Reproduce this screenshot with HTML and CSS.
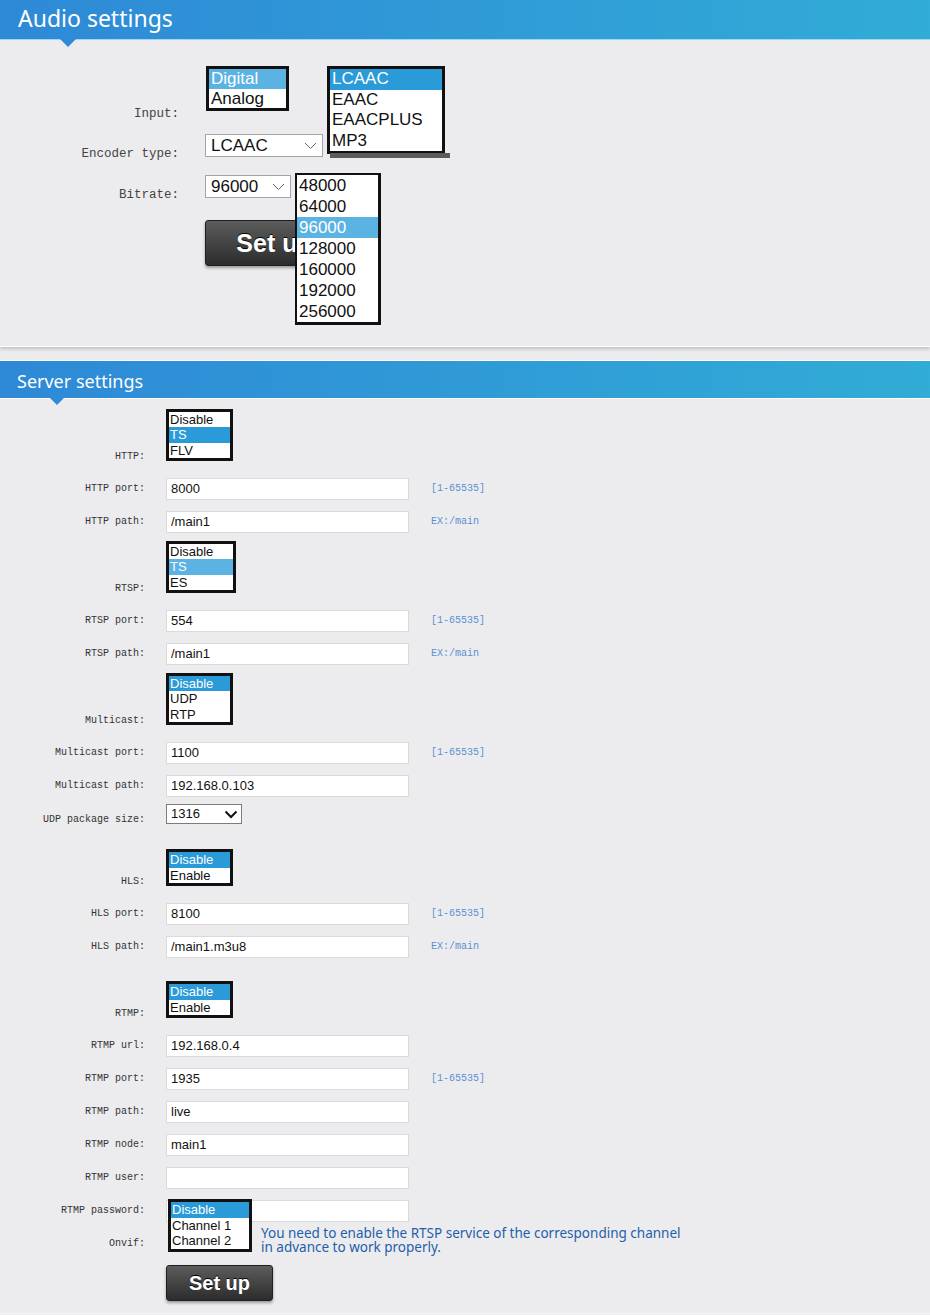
FILE: index.html
```html
<!DOCTYPE html>
<html lang="en">
<head>
<meta charset="utf-8">
<title>Audio and server settings</title>
<link rel="stylesheet" href="styles.css">
</head>
<body>
  <div class="panel audio">
    <div class="panel-head"><h2>Audio settings</h2></div>
    <div class="panel-body">
      <div class="row row-list">
        <label>Input:</label>
        <div class="listbox listbox-lg input-list">
          <div class="opt sel-soft">Digital</div>
          <div class="opt">Analog</div>
        </div>
      </div>
      <div class="row">
        <label>Encoder type:</label>
        <div class="drop">
          <div class="select select-lg enc-select">LCAAC
            <svg class="chev" width="13" height="8" viewBox="0 0 13 8"><polyline points="1,1 6.5,6.5 12,1" fill="none" stroke="#666" stroke-width="1"/></svg>
          </div>
          <div class="listbox listbox-lg popup enc-popup">
            <div class="opt sel">LCAAC</div>
            <div class="opt">EAAC</div>
            <div class="opt">EAACPLUS</div>
            <div class="opt">MP3</div>
          </div>
        </div>
      </div>
      <div class="row">
        <label>Bitrate:</label>
        <div class="drop">
          <div class="select select-lg rate-select">96000
            <svg class="chev" width="13" height="8" viewBox="0 0 13 8"><polyline points="1,1 6.5,6.5 12,1" fill="none" stroke="#666" stroke-width="1"/></svg>
          </div>
          <div class="listbox listbox-lg popup rate-popup">
            <div class="opt">48000</div>
            <div class="opt">64000</div>
            <div class="opt sel-soft">96000</div>
            <div class="opt">128000</div>
            <div class="opt">160000</div>
            <div class="opt">192000</div>
            <div class="opt">256000</div>
          </div>
        </div>
      </div>
      <div class="row-actions">
        <button class="btn btn-lg">Set up</button>
      </div>
    </div>
  </div>

  <div class="panel server">
    <div class="panel-head"><h2>Server settings</h2></div>
    <div class="panel-body">
      <div class="row row-list">
        <label>HTTP:</label>
        <div class="listbox">
          <div class="opt">Disable</div>
          <div class="opt sel">TS</div>
          <div class="opt">FLV</div>
        </div>
      </div>
      <div class="row">
        <label>HTTP port:</label>
        <input class="field" type="text" value="8000">
        <span class="hint">[1-65535]</span>
      </div>
      <div class="row">
        <label>HTTP path:</label>
        <input class="field" type="text" value="/main1">
        <span class="hint">EX:/main</span>
      </div>
      <div class="row row-list">
        <label>RTSP:</label>
        <div class="listbox listbox-wide">
          <div class="opt">Disable</div>
          <div class="opt sel-soft">TS</div>
          <div class="opt">ES</div>
        </div>
      </div>
      <div class="row">
        <label>RTSP port:</label>
        <input class="field" type="text" value="554">
        <span class="hint">[1-65535]</span>
      </div>
      <div class="row">
        <label>RTSP path:</label>
        <input class="field" type="text" value="/main1">
        <span class="hint">EX:/main</span>
      </div>
      <div class="row row-list">
        <label>Multicast:</label>
        <div class="listbox">
          <div class="opt sel">Disable</div>
          <div class="opt">UDP</div>
          <div class="opt">RTP</div>
        </div>
      </div>
      <div class="row">
        <label>Multicast port:</label>
        <input class="field" type="text" value="1100">
        <span class="hint">[1-65535]</span>
      </div>
      <div class="row">
        <label>Multicast path:</label>
        <input class="field" type="text" value="192.168.0.103">
      </div>
      <div class="row row-short">
        <label>UDP package size:</label>
        <div class="select select-sm">1316
          <svg class="chev" width="14" height="9" viewBox="0 0 14 9"><polyline points="1.5,1.5 7,7 12.5,1.5" fill="none" stroke="#111" stroke-width="2"/></svg>
        </div>
      </div>
      <div class="row row-list">
        <label>HLS:</label>
        <div class="listbox">
          <div class="opt sel">Disable</div>
          <div class="opt">Enable</div>
        </div>
      </div>
      <div class="row">
        <label>HLS port:</label>
        <input class="field" type="text" value="8100">
        <span class="hint">[1-65535]</span>
      </div>
      <div class="row">
        <label>HLS path:</label>
        <input class="field" type="text" value="/main1.m3u8">
        <span class="hint">EX:/main</span>
      </div>
      <div class="row row-list">
        <label>RTMP:</label>
        <div class="listbox">
          <div class="opt sel">Disable</div>
          <div class="opt">Enable</div>
        </div>
      </div>
      <div class="row">
        <label>RTMP url:</label>
        <input class="field" type="text" value="192.168.0.4">
      </div>
      <div class="row">
        <label>RTMP port:</label>
        <input class="field" type="text" value="1935">
        <span class="hint">[1-65535]</span>
      </div>
      <div class="row">
        <label>RTMP path:</label>
        <input class="field" type="text" value="live">
      </div>
      <div class="row">
        <label>RTMP node:</label>
        <input class="field" type="text" value="main1">
      </div>
      <div class="row">
        <label>RTMP user:</label>
        <input class="field" type="text" value="">
      </div>
      <div class="row">
        <label>RTMP password:</label>
        <input class="field" type="password" value="">
      </div>
      <div class="row">
        <label>Onvif:</label>
        <div class="drop onvif-anchor">
          <div class="listbox popup onvif-popup">
            <div class="opt sel">Disable</div>
            <div class="opt">Channel 1</div>
            <div class="opt">Channel 2</div>
          </div>
        </div>
        <p class="note">You need to enable the RTSP service of the corresponding channel<br>in advance to work properly.</p>
      </div>
      <div class="row-actions">
        <button class="btn">Set up</button>
      </div>
    </div>
  </div>
</body>
</html>
```

FILE: styles.css
```css
body {
  margin: 0;
  background-color: #ebebed;
  font-family: "Liberation Sans", Arial, sans-serif;
  color: #111;
}

/* panels */
.panel {
  background-color: #ececee;
}
.panel-head {
  position: relative;
  background: linear-gradient(to right, #2e89d7, #31acd6);
}
/* little pointer under the title bar */
.panel-head::after {
  content: "";
  position: absolute;
  left: 60px;
  bottom: -8px;
  border-left: 8px solid transparent;
  border-right: 8px solid transparent;
  border-top: 8px solid #2f8ad7;
}
.panel-head h2 {
  margin: 0;
  color: #fff;
  font-family: "Noto Sans", "Open Sans", sans-serif;
  font-weight: normal;
}
.audio .panel-head {
  height: 39px;
  border-bottom: 1px solid #9fd6f2;
}
.audio .panel-head h2 {
  padding-left: 18px;
  font-size: 23px;
  line-height: 36px;
}
.server .panel-head {
  height: 37px;
  border-top: 1px solid #fff;
  border-bottom: 1px solid #fff;
}
.server .panel-head::after {
  left: 50px;
  bottom: -7px;
  border-left-width: 7px;
  border-right-width: 7px;
  border-top-width: 7px;
}
.server .panel-head h2 {
  padding-left: 17px;
  font-size: 18px;
  line-height: 40px;
}

.audio {
  margin-bottom: 13px;
  border-bottom: 1px solid #fff;
  box-shadow: 0 2px 3px rgba(0, 0, 0, 0.18);
}
.audio .panel-body {
  height: 306px;
  box-sizing: border-box;
  padding-top: 26px;
}
.server .panel-body {
  padding: 7px 0 12px;
  border-bottom: 1px solid #f6f6f6;
}

/* rows */
.row {
  display: flex;
}
.row label {
  flex: none;
  text-align: right;
  font-family: "Liberation Mono", "Courier New", monospace;
}

.audio .row {
  align-items: flex-start;
  height: 23px;
  margin-bottom: 18px;
}
.audio .row label {
  width: 179px;
  margin-right: 26px;
  margin-top: 12px;
  font-size: 12.5px;
  line-height: 16px;
  color: #444;
}
.audio .row-list {
  height: 45px;
  margin-bottom: 23px;
}
.audio .row-list label {
  margin-top: 40px;
}
.audio .row-actions {
  margin-top: 22px;
  padding-left: 205px;
}

.server .row {
  align-items: center;
  height: 33px;
}
.server .row label {
  width: 145px;
  margin-right: 21px;
  font-size: 10px;
  line-height: 14px;
  color: #333;
}
.server .row-list {
  height: 66px;
  box-sizing: border-box;
  align-items: flex-end;
  padding-bottom: 11px;
}
.server .row-list label {
  margin-bottom: -3px;
}
.server .row-short {
  height: 29px;
  box-sizing: border-box;
  align-items: flex-start;
  padding-top: 2px;
}
.server .row-short label {
  margin-top: 9px;
}
.server .row-actions {
  margin-top: 5px;
  padding-left: 166px;
}

/* controls */
.field {
  width: 243px;
  height: 22px;
  box-sizing: border-box;
  margin: 0;
  padding: 0 4px;
  border: 1px solid #dadada;
  background: #fff;
  font-family: "Liberation Sans", Arial, sans-serif;
  font-size: 13px;
  color: #111;
  outline: none;
}
.hint {
  margin-left: 22px;
  font-family: "Liberation Mono", "Courier New", monospace;
  font-size: 10px;
  color: #5a90d2;
}
.note {
  margin: 0 0 8px 9px;
  font-family: "Noto Sans", "Open Sans", sans-serif;
  font-size: 13.5px;
  line-height: 14px;
  color: #1f5eab;
}

.drop {
  position: relative;
}
.select {
  position: relative;
  box-sizing: border-box;
  background: #fff;
}
.select .chev {
  position: absolute;
  top: 50%;
  margin-top: -4px;
}
.select-lg {
  height: 23px;
  padding-left: 5px;
  border: 1px solid #a4a4a4;
  font-size: 17px;
  line-height: 21px;
}
.select-lg .chev {
  right: 5px;
}
.enc-select {
  width: 118px;
}
.rate-select {
  width: 86px;
}
.select-sm {
  width: 76px;
  height: 20px;
  padding-left: 4px;
  border: 1px solid #7c7c7c;
  font-size: 13px;
  line-height: 18px;
}
.select-sm .chev {
  right: 3px;
}

/* open list boxes */
.listbox {
  display: inline-block;
  box-sizing: border-box;
  width: 67px;
  border: 3px solid #111;
  background: #fff;
  font-size: 13px;
  line-height: 15.5px;
  color: #111;
}
.listbox-wide {
  width: 70px;
}
.listbox .opt {
  padding-left: 1px;
  white-space: nowrap;
}
.listbox-lg {
  font-size: 17px;
  line-height: 20.5px;
}
.listbox-lg .opt {
  padding-left: 2px;
}
.opt.sel {
  background-color: #2a9ad9;
  color: #fff;
}
.opt.sel-soft {
  background-color: #5bb3e4;
  color: #fff;
}
.input-list {
  width: 83px;
  margin-left: 1px;
  line-height: 19.5px;
}
.popup {
  position: absolute;
  z-index: 2;
}
.enc-popup {
  left: 122px;
  bottom: 3px;
  width: 118px;
}
/* grey strip left by the closed select below the list */
.enc-popup::after {
  content: "";
  position: absolute;
  left: 0;
  right: -8px;
  bottom: -7px;
  height: 5px;
  background: #5b5b5b;
  z-index: -1;
}
.rate-popup {
  left: 90px;
  top: -2px;
  width: 86px;
  border-width: 2px 3px 3px 2px;
  line-height: 21px;
}
.onvif-anchor {
  width: 86px;
  height: 20px;
}
.onvif-popup {
  left: 2px;
  bottom: 2px;
  width: 84px;
  line-height: 15.5px;
}

/* buttons */
.btn {
  width: 107px;
  height: 36px;
  padding: 0;
  border: 1px solid #1f1f1f;
  border-radius: 3px;
  background: linear-gradient(#5c5c5c, #2c2c2c);
  box-shadow: 0 2px 3px rgba(0, 0, 0, 0.35);
  color: #fff;
  font-family: "Liberation Sans", Arial, sans-serif;
  font-size: 20px;
  font-weight: bold;
  text-shadow: 0 -1px 0 #000;
  cursor: pointer;
}
.btn-lg {
  width: 139px;
  height: 46px;
  font-size: 25px;
}
```
